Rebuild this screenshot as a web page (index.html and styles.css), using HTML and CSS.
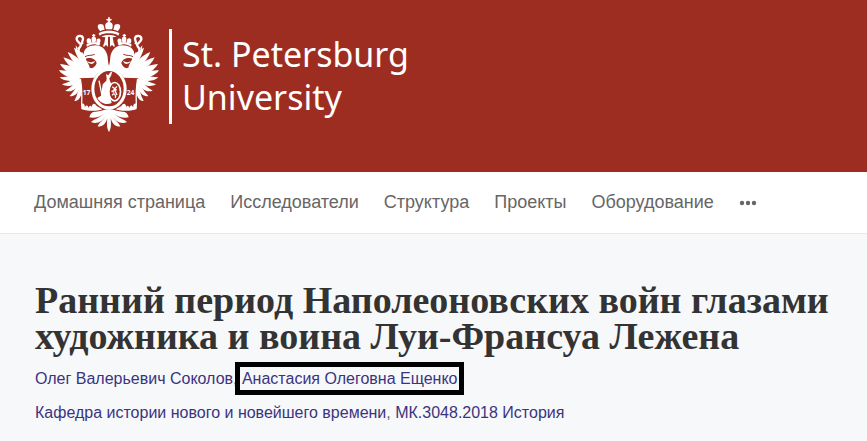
FILE: index.html
```
<!DOCTYPE html>
<html lang="ru">
<head>
<meta charset="UTF-8" />
<meta name="viewport" content="width=device-width, initial-scale=1" />
<title>Ранний период Наполеоновских войн глазами художника и воина Луи-Франсуа Лежена</title>
<link rel="stylesheet" href="styles.css">
</head>
<body>
  <header class="header">
    <a class="logo" href="#">
      <svg class="emblem" viewBox="27 27 300 345" aria-hidden="true">
        <defs>
          <g id="half">
            <!-- wing -->
            <path d="M120 206 C101 180 80 151 72 119 C96 130 110 155 118 175 Z" />
            <path d="M120 206 C91 188 65 162 53 132 C81 142 103 169 115 187 Z" />
            <path d="M118 208 C87 199 53 177 40 148 C70 155 100 180 113 196 Z" />
            <path d="M118 209 C82 209 44 194 30 168 C59 170 93 187 112 201 Z" />
            <path d="M116 209 C79 217 41 208 27 187 C54 186 89 195 110 203 Z" />
            <path d="M100 207 C73 223 43 222 29 208 C53 204 75 204 100 205 Z" />
            <path d="M96 209 C78 234 53 239 36 229 C58 222 75 213 90 206 Z" />
            <path d="M96 212 C84 243 64 255 46 248 C65 237 78 223 89 208 Z" />
            <path d="M94 217 C91 251 77 268 59 264 C73 249 82 233 90 212 Z" />
            <path d="M94 225 C100 256 91 279 73 279 C83 261 86 242 89 221 Z" />
            <path d="M76 145 C90 166 104 177 123 180 L130 211 L92 210 C87 195 83 184 80 174 Z" />
            <!-- head and neck -->
            <path d="M101 137 C103 120 118 112 136 112 C158 112 170 128 173 147 C174 165 177 172 178 178 L178 194 C159 185 144 192 132 210 L123 212 C112 202 104 190 98 178 C112 188 136 182 140 165 C136 153 126 149 116 150 C107 150 104 155 107 162 C97 157 94 145 101 137 Z" />
            <path d="M111 160 C119 164 128 163 135 158 C131 171 118 170 111 160 Z" />
            <path d="M105 146 C114 140 124 144 134 139" class="cut thin" />
            <!-- ribbon -->
            <path d="M99 138 C81 137 84 122 91 115 C98 107 81 103 80 94 C79 81 97 80 99 91 C100 99 92 102 98 109" class="line wide" />
            <path d="M77 112 L84 121 L79 127 Z" />
            <!-- small crown -->
            <path d="M109 110 C115 103 144 100 151 107 L147 113 C136 106 122 107 111 116 Z" />
            <path d="M112 106 C105 91 117 88 122 93 L125 104 Z M127 104 C122 91 126 86 131 85 C138 87 141 93 136 104 Z M139 104 L140 94 C147 88 156 94 149 106 Z" />
            <path d="M131 78 V88 M126 82 H136" class="line" />
            <!-- main crown -->
            <path d="M146 76 C155 69 168 68 178 68 V76 C166 76 157 77 149 83 Z" />
            <path d="M151 70 C136 54 145 43 160 50 L164 65 C158 66 154 67 151 70 Z M168 64 C162 49 168 42 178 41 V64 Z" />
            <path d="M154 86 C163 82 171 81 178 81 V86 H174 V118 C170 110 166 111 163 116 C159 118 158 113 163 104 L166 88 Z" />
            <!-- book and claw -->
            <path d="M89 211 L132 209 L126 288 C122 281 118 286 119 294 C113 283 107 284 108 295 L99 289 C99 261 95 235 89 211 Z" class="red" />
            <path d="M91 213 C96 238 96 265 95 292" class="line" />
            <path d="M93 288 C100 283 106 289 104 298 C109 289 115 291 115 300 C119 290 126 292 125 300 C126 284 134 285 140 294 L157 304 C139 311 105 309 94 303 Z" />
            <!-- tail -->
            <path d="M178 304 C161 304 149 312 134 311 C125 312 120 319 118 328 C133 332 151 326 161 317 C148 331 133 332 123 342 C141 350 159 339 167 323 C161 337 148 342 143 355 C157 359 168 346 172 331 C171 348 169 362 178 372 Z" />
          </g>
        </defs>
        <use href="#half" />
        <use href="#half" transform="translate(354 0) scale(-1 1)" />
        <circle cx="177" cy="36" r="5" />
        <path d="M177 27 V44 M169 35 H185" class="line" />
        <!-- oval shield with the standing figure -->
        <ellipse cx="177" cy="243" rx="53" ry="62" />
        <ellipse cx="177" cy="242" rx="44" ry="53" class="red" />
        <path d="M170 211 L168 198 L175 202 L180 194 L187 190 L183 204 L178 211 L180 219 L184 229 L179 237 L178 257 L185 285 C167 293 150 284 142 270 L153 263 L158 229 L169 218 Z" />
        <path d="M147 218 L159 277" class="line" />
        <ellipse cx="194" cy="251" rx="20" ry="30" />
        <ellipse cx="194" cy="251" rx="15" ry="25" class="red" />
        <path d="M187 236 L200 247 M201 235 L187 251 M193 244 L201 261 M187 262 C192 252 199 262 196 270 M184 249 L193 253" class="line" />
        <text x="98" y="260" class="year">17</text>
        <text x="230" y="260" class="year">24</text>
      </svg>
      <span class="logo-text">St. Petersburg<br>University</span>
    </a>
  </header>

  <nav class="nav" aria-label="Основное меню">
    <a href="#">Домашняя страница</a>
    <a href="#">Исследователи</a>
    <a href="#">Структура</a>
    <a href="#">Проекты</a>
    <a href="#">Оборудование</a>
    <button type="button" class="more" aria-label="Ещё">
      <svg viewBox="0 0 18 6" aria-hidden="true">
        <circle cx="3" cy="3" r="2.2" />
        <circle cx="9" cy="3" r="2.2" />
        <circle cx="15" cy="3" r="2.2" />
      </svg>
    </button>
  </nav>

  <main class="publication">
    <h1>Ранний период Наполеоновских войн глазами художника и воина Луи-Франсуа Лежена</h1>
    <p class="authors"><a href="#">Олег Валерьевич Соколов</a>, <a href="#" class="marked">Анастасия Олеговна Ещенко</a></p>
    <p class="units"><a href="#">Кафедра истории нового и новейшего времени</a>, <a href="#">МК.3048.2018 История</a></p>
  </main>
</body>
</html>
```
FILE: styles.css
```
* {
  box-sizing: border-box;
}
body {
  margin: 0;
  min-height: 100vh;
  font-family: "Liberation Sans", Arial, sans-serif;
  background: #f7f8fa;
  color: #333;
}
a {
  text-decoration: none;
}

/* Header */
.header {
  background: #9e2d21;
  padding: 17px 59px 40px;
}
.logo {
  display: flex;
  align-items: flex-start;
  gap: 10px;
  color: #fff;
}
.emblem {
  width: 100px;
  height: 115px;
  fill: #fff;
}
.emblem .red {
  fill: #9e2d21;
}
.emblem .line,
.emblem .cut {
  fill: none;
  stroke: #fff;
  stroke-width: 4;
}
.emblem .cut {
  stroke: #9e2d21;
}
.emblem .thin {
  stroke-width: 3;
}
.emblem .wide {
  stroke-width: 7;
}
.year {
  font: bold 20px "Open Sans", sans-serif;
}
.logo-text {
  margin-top: 12px;
  padding: 4px 0 5px 10px;
  border-left: 3px solid #fff;
  font-family: "Noto Sans", "Open Sans", sans-serif;
  font-size: 34px;
  line-height: 43px;
}

/* Navigation */
.nav {
  display: flex;
  flex-wrap: wrap;
  align-items: center;
  gap: 25px;
  padding: 20px 34px;
  background: #fff;
  border-bottom: 1px solid #e8e8ea;
  font-size: 18px;
  line-height: 21px;
}
.nav a {
  color: #666;
}
.more {
  padding: 0;
  border: 0;
  background: none;
  line-height: 0;
  cursor: pointer;
}
.more svg {
  width: 18px;
  height: 6px;
  fill: #666;
}

/* Publication */
.publication {
  padding: 48px 16px 19px 35px;
}
h1 {
  margin: 0 0 16px;
  font-family: Georgia, "Liberation Serif", serif;
  font-size: 38px;
  line-height: 36px;
}
.publication p {
  margin: 0 0 16px;
  font-size: 16px;
  line-height: 18px;
  color: #666;
}
.publication a {
  color: #3a3480;
}
.publication .marked {
  padding: 1px 0;
  outline: 5px solid #000;
  outline-offset: 2px;
}
```
